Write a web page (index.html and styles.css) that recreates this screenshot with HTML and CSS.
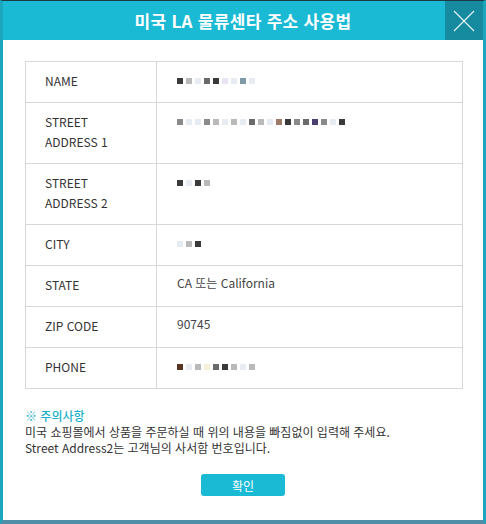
FILE: index.html
```html
<!DOCTYPE html>
<html lang="ko">
<head>
<meta charset="utf-8">
<link rel="stylesheet" href="styles.css">
</head>
<body>
<div class="dialog">
  <div class="header">
    <div class="title">미국 LA 물류센타 주소 사용법</div>
    <div class="close">
      <svg width="22" height="22" viewBox="0 0 22 22"><path d="M1 1L21 21M21 1L1 21" stroke="#e6f6f9" stroke-width="1.1" fill="none"/></svg>
    </div>
  </div>
  <div class="body">
    <div class="table">
      <div class="row"><div class="label">NAME</div><div class="value"><span class="mosaic"><i class="d"></i><i class="s"></i><i class="l"></i><i class="x"></i><i class="d"></i><i class="p"></i><i class="l"></i><i class="b"></i><i class="l"></i></span></div></div>
      <div class="row tall"><div class="label">STREET<br>ADDRESS 1</div><div class="value"><span class="mosaic"><i class="m"></i><i class="l"></i><i class="l"></i><i class="m"></i><i class="s"></i><i class="l"></i><i class="s"></i><i class="l"></i><i class="x"></i><i class="s"></i><i class="l"></i><i class="r"></i><i class="d"></i><i class="m"></i><i class="x"></i><i class="p2"></i><i class="m"></i><i class="l"></i><i class="d"></i></span></div></div>
      <div class="row tall"><div class="label">STREET<br>ADDRESS 2</div><div class="value"><span class="mosaic"><i class="d"></i><i class="l"></i><i class="d"></i><i class="s"></i></span></div></div>
      <div class="row"><div class="label">CITY</div><div class="value"><span class="mosaic"><i class="l"></i><i class="s"></i><i class="d"></i></span></div></div>
      <div class="row"><div class="label">STATE</div><div class="value">CA 또는 California</div></div>
      <div class="row"><div class="label">ZIP CODE</div><div class="value">90745</div></div>
      <div class="row"><div class="label">PHONE</div><div class="value"><span class="mosaic"><i class="r2"></i><i class="l"></i><i class="s"></i><i class="y"></i><i class="x"></i><i class="d"></i><i class="s"></i><i class="l"></i><i class="s"></i></span></div></div>
    </div>
    <div class="notice">
      <div class="notice-title">※ 주의사항</div>
      <div>미국 쇼핑몰에서 상품을 주문하실 때 위의 내용을 빠짐없이 입력해 주세요.</div>
      <div>Street Address2는 고객님의 사서함 번호입니다.</div>
    </div>
    <div class="actions"><button class="ok">확인</button></div>
  </div>
</div>
</body>
</html>
```

FILE: styles.css
```css
* { box-sizing: border-box; }
html, body { margin: 0; padding: 0; background: #fff; }
body { font-family: "Noto Sans CJK KR", "Noto Sans", sans-serif; color: #333; }
.dialog {
  width: 486px;
  height: 524px;
  border-top: 1px solid #1d3a44;
  border-left: 3px solid #1ba6bd;
  border-right: 3px solid #1ba6bd;
  border-bottom: 4px solid #4f8ea6;
  display: flex;
  flex-direction: column;
}
.header {
  height: 39px;
  background: #1ab9d4;
  display: flex;
}
.title {
  flex: 1;
  text-align: center;
  color: #fff;
  font-size: 17px;
  font-weight: bold;
  line-height: 39px;
  padding-left: 38px;
  letter-spacing: 0.3px;
}
.close {
  width: 38px;
  height: 39px;
  background: #168a9e;
  display: flex;
  align-items: center;
  justify-content: center;
}
.body { flex: 1; padding: 21px 20px 0 22px; }
.table {
  border: 1px solid #d8d8d8;
  width: 438px;
}
.row {
  display: grid;
  grid-template-columns: 131px 1fr;
  height: 41px;
  border-top: 1px solid #d8d8d8;
  font-size: 12px;
}
.row:first-child { border-top: none; height: 40px; }
.row.tall { height: 61px; }
.label {
  border-right: 1px solid #d8d8d8;
  padding: 9px 0 0 19px;
  line-height: 20px;
  color: #333;
}
.value {
  padding: 7px 0 0 20px;
  line-height: 20px;
  color: #444;
}
.mosaic { display: inline-flex; align-items: center; height: 20px; padding-top: 2px; }
.mosaic i { display: inline-block; width: 6px; height: 6px; margin-right: 3px; }
.mosaic i.d { background: #3a3a3a; }
.mosaic i.m { background: #8a8a8a; }
.mosaic i.l { background: #e6ecf2; }
.mosaic i.s { background: #b9b9b9; }
.mosaic i.x { background: #6a6a6a; }
.mosaic i.y { background: #f6efd8; }
.mosaic i.p { background: #e9e2f0; }
.mosaic i.b { background: #7e9aa6; }
.mosaic i.r { background: #a07a68; }
.mosaic i.r2 { background: #5a3420; }
.mosaic i.p2 { background: #4a3f70; }
.notice {
  margin-top: 19px;
  font-size: 12px;
  line-height: 16px;
  color: #333;
}
.notice-title { color: #1ab0c8; font-weight: 500; }
.actions { display: flex; justify-content: center; margin-top: 18px; padding-right: 2px; }
.ok {
  width: 84px;
  height: 22px;
  border: none;
  border-radius: 3px;
  background: #1ab9d4;
  color: #fff;
  font-family: "Noto Sans CJK KR", sans-serif;
  font-size: 12px;
  padding: 0;
}
```
